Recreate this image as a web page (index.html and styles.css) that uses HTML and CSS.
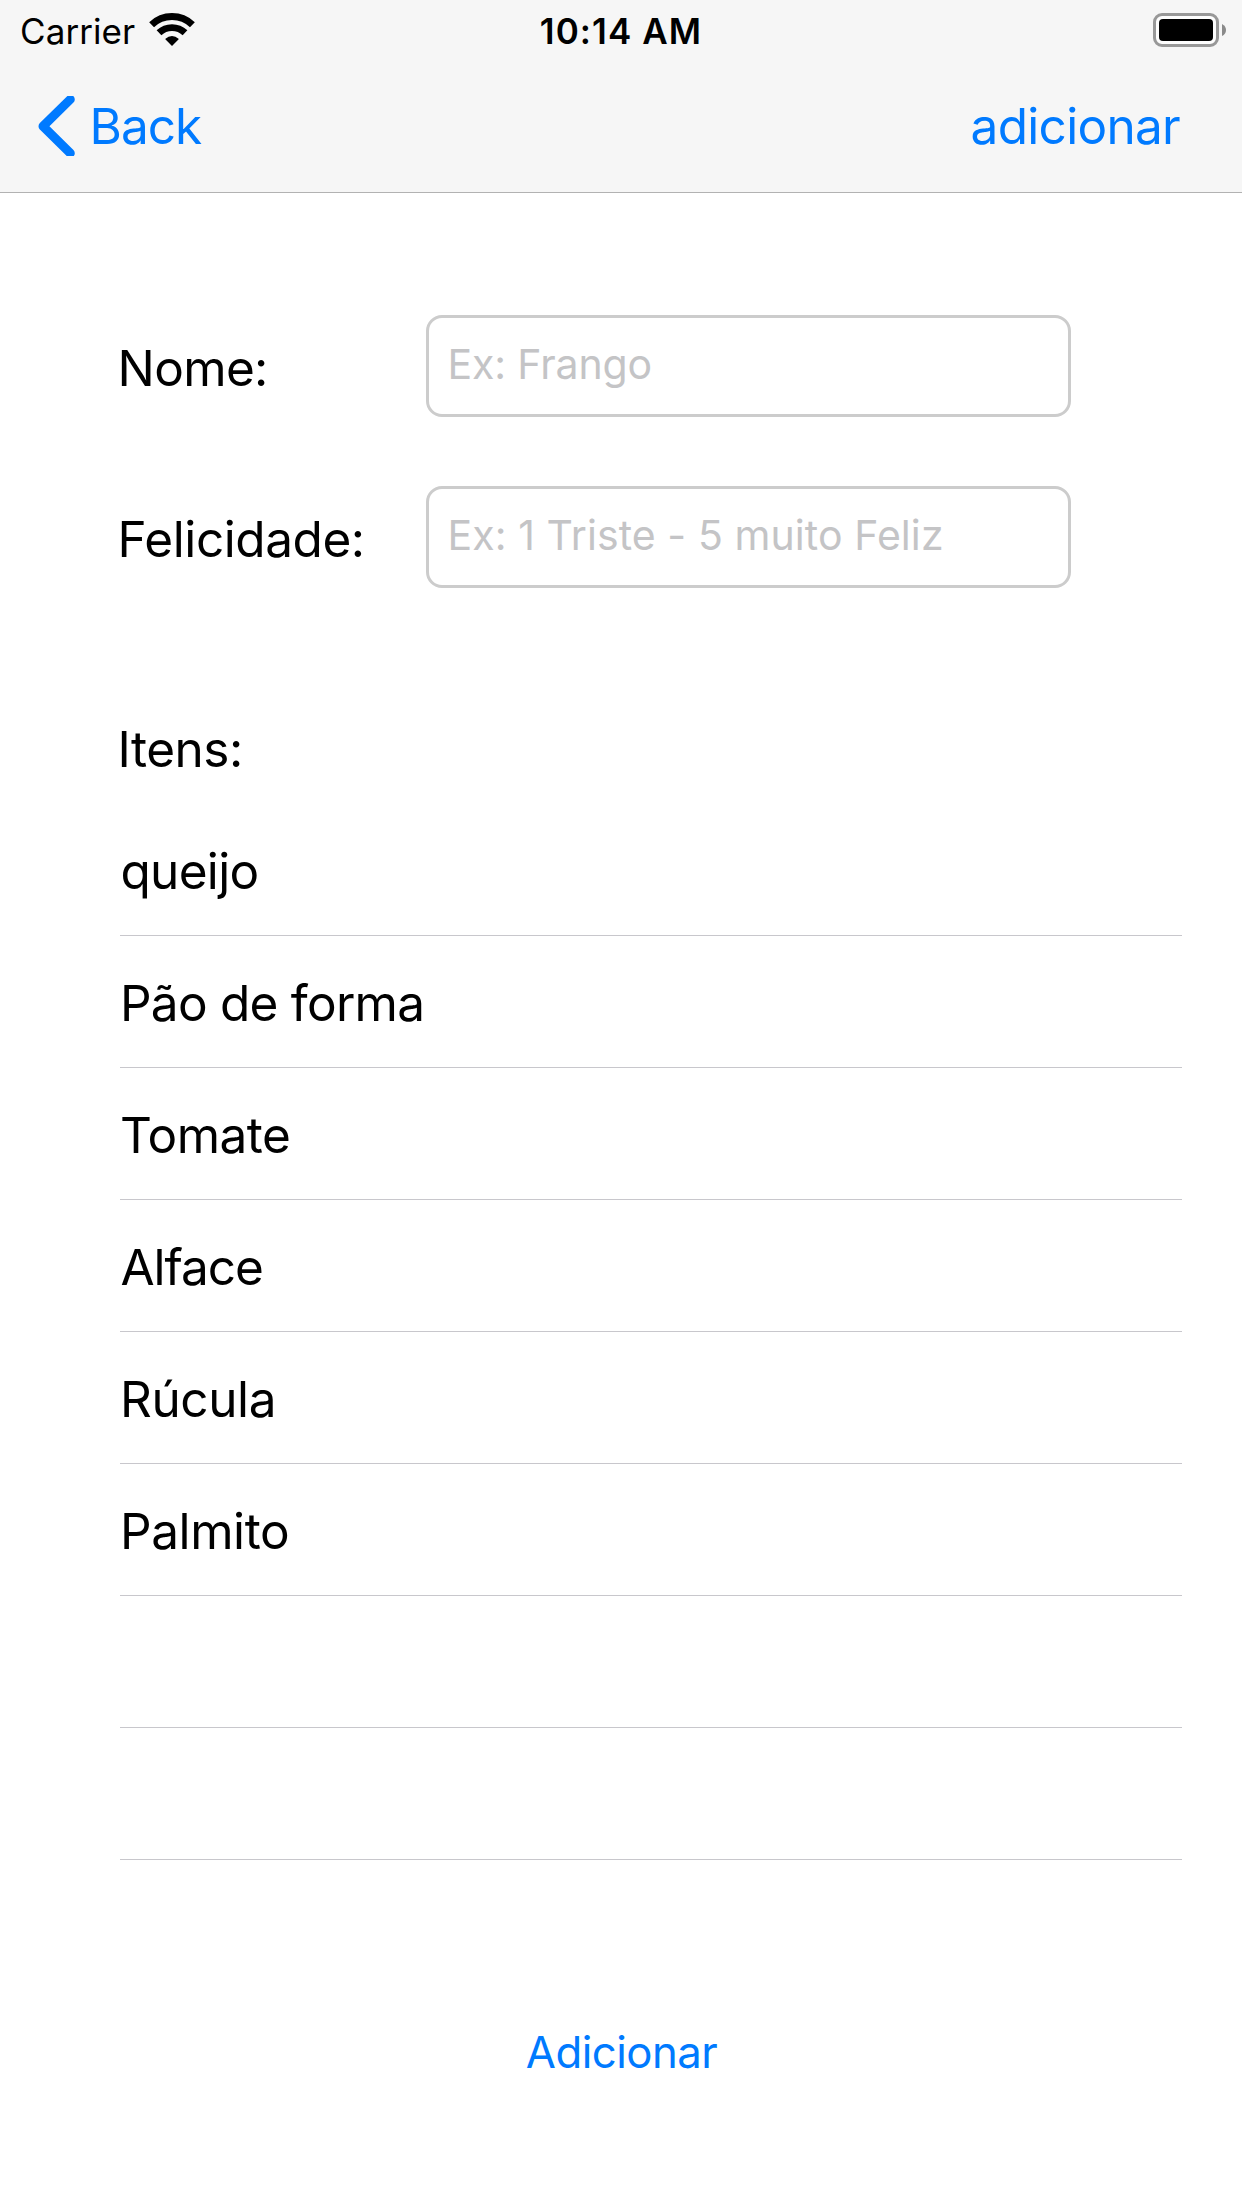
FILE: index.html
```html
<!DOCTYPE html>
<html lang="pt">
<head>
  <meta charset="utf-8">
  <title>Nova refeição</title>
  <link rel="stylesheet" href="styles.css">
</head>
<body>
  <header class="top">
    <div class="status">
      <div class="status-left">
        <span class="carrier">Carrier</span>
        <svg class="wifi" width="48" height="36" viewBox="0 0 48 36">
          <g fill="none" stroke="#000">
            <path stroke-width="7" d="M3.6 13.8A29.5 29.5 0 0 1 44.4 13.8"/>
            <path stroke-width="6.8" d="M11 21.8A18.7 18.7 0 0 1 37 21.8"/>
          </g>
          <path d="M24 35L17.1 28.1Q24 22 30.9 28.1Z"/>
        </svg>
      </div>
      <span class="clock">10:14 AM</span>
      <svg class="battery" width="73" height="34" viewBox="0 0 73 34">
        <rect x="1.5" y="1.5" width="63" height="31" rx="7.5" fill="#fdfdfd" stroke="#989898" stroke-width="3"/>
        <rect x="6" y="6" width="54" height="22" rx="4"/>
        <path fill="#8a8a8a" d="M69 11Q73 13 73 17Q73 21 69 23Z"/>
      </svg>
    </div>
    <nav class="nav">
      <a class="back">
        <svg class="chevron" width="38" height="60" viewBox="0 0 38 60">
          <path d="M32.3 3.4L5 30.3L32.3 57.2"/>
        </svg>
        <span class="back-text">Back</span>
      </a>
      <a class="action">adicionar</a>
    </nav>
  </header>
  <main class="content">
    <form class="fields">
      <label class="label nome" for="nome">Nome:</label>
      <input class="input" id="nome" placeholder="Ex: Frango">
      <label class="label felicidade" for="felicidade">Felicidade:</label>
      <input class="input wide" id="felicidade" placeholder="Ex: 1 Triste - 5 muito Feliz">
    </form>
    <h2 class="heading">Itens:</h2>
    <ul class="list">
      <li class="row queijo">queijo</li>
      <li class="row pao">Pão de forma</li>
      <li class="row tomate">Tomate</li>
      <li class="row alface">Alface</li>
      <li class="row rucula">Rúcula</li>
      <li class="row palmito">Palmito</li>
      <li class="row"></li>
      <li class="row"></li>
    </ul>
    <button class="add" type="button">Adicionar</button>
  </main>
</body>
</html>
```
FILE: styles.css
```css
* { box-sizing: border-box; }

body {
  margin: 0;
  min-height: 2208px;
  background: #fff;
  color: #000;
  font: 400 49.5px/60px Inter, "Liberation Sans", sans-serif;
}

.top {
  height: 193px;
  background: #f6f6f6;
  border-bottom: 1px solid #b2b2b2;
}

/* Status bar */
.status {
  display: grid;
  grid-template-columns: 1fr auto 1fr;
  height: 60px;
  padding: 10px 16px 0 20px;
  font-size: 35px;
  line-height: 42px;
}

.status-left { display: flex; gap: 13px; }
.carrier { letter-spacing: .08px; }
.wifi { margin-top: 1px; }
.clock { padding-right: 4px; font-weight: 600; letter-spacing: 1.08px; }
.battery { justify-self: end; margin-top: 3px; }

/* Navigation bar */
.nav {
  display: flex;
  align-items: center;
  justify-content: space-between;
  height: 132px;
  padding: 0 62px 0 38px;
  color: #007aff;
}

.back { display: flex; gap: 13.5px; }
.chevron path {
  fill: none;
  stroke: #007aff;
  stroke-width: 9;
  stroke-linecap: round;
  stroke-linejoin: round;
}
.back-text { letter-spacing: -1px; }
.action { letter-spacing: -.7px; }

/* Form */
.content {
  display: flex;
  flex-direction: column;
  padding: 122px 60px 0 117px;
}

.fields {
  display: grid;
  grid-template-columns: 309px 645px;
  row-gap: 69px;
  align-items: center;
}

.label { padding: 4px 0 0 .5px; }
.nome { letter-spacing: -.65px; }
.felicidade { letter-spacing: -.43px; }

.input {
  height: 102px;
  padding: 0 18px 4px 18.5px;
  border: 3px solid #ccc;
  border-radius: 16px;
  background: #fff;
  font: 400 41px/50px Inter, "Liberation Sans", sans-serif;
  letter-spacing: -.13px;
}
.input.wide { letter-spacing: .08px; }
.input::placeholder { color: #c4c4c6; opacity: 1; }

.heading {
  margin: 131px 0 25px;
  padding-left: .5px;
  font: inherit;
  letter-spacing: -.5px;
}

/* Items */
.list {
  margin: 0 0 0 3px;
  padding: 0;
  list-style: none;
}

.row {
  height: 132px;
  padding-top: 37px;
  border-bottom: 1px solid #c8c7cc;
}
.queijo { padding-left: .5px; letter-spacing: -.7px; }
.pao { letter-spacing: -.75px; }
.tomate { letter-spacing: -.53px; }
.alface { padding-left: .5px; letter-spacing: -1.05px; }
.rucula { letter-spacing: -.4px; }
.palmito { letter-spacing: -.41px; }

.add {
  align-self: center;
  margin: 166px 56px 0 0;
  padding: 0;
  border: 0;
  background: none;
  color: #007aff;
  font: 400 43.7px/53px Inter, "Liberation Sans", sans-serif;
  letter-spacing: -.5px;
}
```
